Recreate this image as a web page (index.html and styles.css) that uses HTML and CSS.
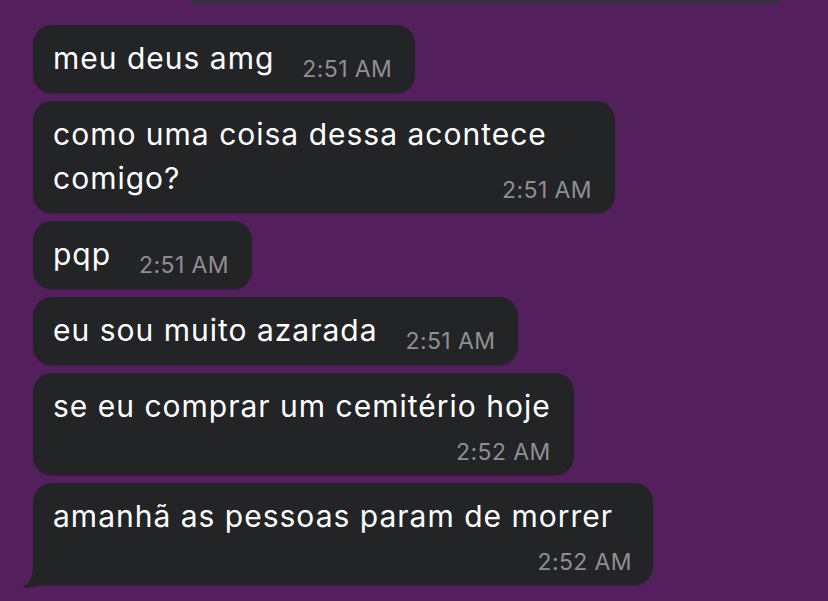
FILE: index.html
```html
<!DOCTYPE html>
<html lang="pt">
<head>
<meta charset="utf-8">
<title>Chat</title>
<link rel="stylesheet" href="styles.css">
</head>
<body>
<div class="screen">
  <div class="prev-edge"></div>
  <div class="messages">
    <div class="bubble">
      <span class="text">meu deus amg</span>
      <span class="time">2:51 AM</span>
    </div>
    <div class="bubble bubble--wrap">
      <span class="text">como uma coisa dessa acontece comigo?</span><span class="time">2:51 AM</span>
    </div>
    <div class="bubble">
      <span class="text">pqp</span>
      <span class="time">2:51 AM</span>
    </div>
    <div class="bubble">
      <span class="text">eu sou muito azarada</span>
      <span class="time">2:51 AM</span>
    </div>
    <div class="bubble bubble--stack">
      <span class="text">se eu comprar um cemitério hoje</span>
      <span class="time">2:52 AM</span>
    </div>
    <div class="bubble bubble--stack bubble--tail">
      <span class="text">amanhã as pessoas param de morrer</span>
      <span class="time">2:52 AM</span>
      <svg class="tail" width="30" height="42" viewBox="0 0 30 42" aria-hidden="true">
        <path d="M13 0 V20 C13 31 9 37 1 41 C9 41.5 15 40 19 38 L30 38 V0 Z" fill="#232426"/>
      </svg>
    </div>
  </div>
</div>
</body>
</html>
```

FILE: styles.css
```css
html, body {
  margin: 0;
  padding: 0;
}

body {
  background: #53205d;
  font-family: "Inter", "Liberation Sans", sans-serif;
  -webkit-font-smoothing: antialiased;
}

.screen {
  width: 828px;
  height: 601px;
  overflow: hidden;
  background: #53205d;
}

.prev-edge {
  height: 3px;
  margin-left: 190px;
  width: 590px;
  background: #30343f;
  border-radius: 0 0 3px 3px;
}

.messages {
  display: flex;
  flex-direction: column;
  align-items: flex-start;
  gap: 8px;
  padding-left: 33px;
  margin-top: 22px;
}

.bubble {
  position: relative;
  display: flex;
  align-items: flex-end;
  background: #232426;
  border-radius: 19px;
  padding: 11px 23px 13px 20px;
  box-shadow: 0 1px 1px rgba(0, 0, 0, 0.22);
  color: #ffffff;
}

.text {
  font-size: 30px;
  line-height: 44px;
  letter-spacing: 1px;
}

.time {
  font-size: 23px;
  line-height: 22px;
  letter-spacing: 0.4px;
  color: #8e8f91;
  margin-left: 28px;
  white-space: nowrap;
}

.bubble--wrap {
  display: flow-root;
  width: 582px;
  box-sizing: border-box;
  font-size: 30px;
  line-height: 44px;
  padding-bottom: 12px;
}

.bubble--wrap .time {
  float: right;
  margin-top: 23px;
  margin-left: 0;
}

.bubble--stack {
  display: block;
  padding-bottom: 12px;
}

.bubble--stack .text {
  display: block;
  white-space: nowrap;
}

.bubble--stack .time {
  display: block;
  text-align: right;
  margin-top: 13px;
  margin-left: 0;
}

.bubble--tail {
  border-bottom-left-radius: 0;
  padding-right: 21px;
}

.bubble--tail .text {
  padding-right: 19px;
}

.tail {
  position: absolute;
  left: -13px;
  bottom: -4px;
}
```
